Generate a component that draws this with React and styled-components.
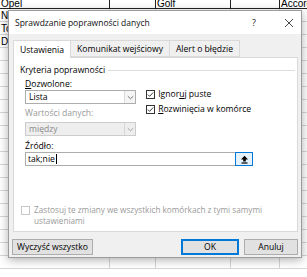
import styled, { createGlobalStyle } from "styled-components";

const GlobalStyle = createGlobalStyle`
  html, body {
    margin: 0;
    padding: 0;
    background: #fff;
  }
  * {
    box-sizing: border-box;
  }
`;

const Screen = styled.div`
  position: relative;
  width: 307px;
  height: 277px;
  overflow: hidden;
  background: #fff;
`;

const Sheet = styled.div`
  display: grid;
  grid-template-columns: 110px 46px 75px 49px 1fr;
  grid-template-rows: 9px;
  grid-auto-rows: 13px;
  font-family: "Liberation Sans", Arial, sans-serif;
  font-size: 10px;
  color: #000;
`;

const Cell = styled.div`
  display: flex;
  align-items: flex-end;
  padding-left: 1px;
  line-height: ${({ $head }) => ($head ? "8px" : "11px")};
  overflow: ${({ $head }) => ($head ? "visible" : "hidden")};
  white-space: nowrap;
  border-right: 1px solid ${({ $head }) => ($head ? "#222" : "#d6d6d6")};
  border-bottom: 1px solid ${({ $head }) => ($head ? "#222" : "#d6d6d6")};
`;

const Dialog = styled.div`
  position: absolute;
  left: 8px;
  top: 10px;
  width: 294px;
  height: 248px;
  border: 1px solid #9c9c9c;
  box-shadow: 0 2px 9px rgba(0, 0, 0, 0.32);
  background: #f0f0f0;
  display: flex;
  flex-direction: column;
  font-family: "Open Sans", "Noto Sans", sans-serif;
  font-size: 8.6px;
  color: #000;
`;

const TitleBar = styled.div`
  height: 23px;
  background: #fff;
  display: flex;
  align-items: center;
  padding-left: 6px;
`;

const Title = styled.div`
  flex: 1;
  font-size: 8.5px;
  color: #111;
`;

const TitleButton = styled.div`
  width: 24px;
  height: 100%;
  display: flex;
  align-items: center;
  justify-content: center;
  font-size: 9px;
  color: #222;
  margin-right: ${({ $gap }) => $gap || "0"};
`;

const Body = styled.div`
  flex: 1;
  display: flex;
  flex-direction: column;
  padding: 6px 3px 0 3px;
`;

const Tabs = styled.div`
  display: flex;
  height: 17px;
  margin-left: 1px;
`;

const Tab = styled.div`
  display: flex;
  align-items: center;
  padding: 0 6px;
  border: 1px solid #d9d9d9;
  border-left-width: ${({ $first }) => ($first ? "1px" : "0")};
  border-bottom: ${({ $active }) => ($active ? "none" : "1px solid #d9d9d9")};
  background: ${({ $active }) => ($active ? "#fff" : "#f0f0f0")};
  position: relative;
  z-index: 1;
  margin-bottom: ${({ $active }) => ($active ? "-1px" : "0")};
  height: ${({ $active }) => ($active ? "18px" : "17px")};
`;

const Panel = styled.div`
  height: 175px;
  margin-left: 1px;
  border: 1px solid #d9d9d9;
  background: #fff;
  display: flex;
  flex-direction: column;
  padding: 6px 2px 0 6px;
`;

const GroupHeader = styled.div`
  display: flex;
  align-items: center;
  height: 12px;
  gap: 3px;
  &::after {
    content: "";
    flex: 1;
    border-top: 1px solid #dcdcdc;
  }
`;

const Fields = styled.div`
  display: flex;
  gap: 10px;
  padding-left: 5px;
`;

const Column = styled.div`
  display: flex;
  flex-direction: column;
  width: ${({ $width }) => $width};
`;

const Label = styled.div`
  height: 12px;
  line-height: 12px;
  margin-top: ${({ $top }) => $top || "0"};
  color: ${({ $disabled }) => ($disabled ? "#9a9a9a" : "#000")};
  u {
    text-decoration-thickness: 1px;
    text-underline-offset: 1px;
  }
`;

const Combo = styled.div`
  height: 14px;
  display: flex;
  border: 1px solid ${({ $disabled }) => ($disabled ? "#cccccc" : "#adadad")};
  background: ${({ $disabled }) => ($disabled ? "#eeeeee" : "#fff")};
  color: ${({ $disabled }) => ($disabled ? "#8a8a8a" : "#000")};
  margin-top: ${({ $top }) => $top || "0"};
`;

const ComboText = styled.div`
  flex: 1;
  padding-left: 3px;
  line-height: 12px;
`;

const ComboArrow = styled.div`
  width: 11px;
  display: flex;
  align-items: center;
  justify-content: center;
  border-left: 1px solid ${({ $disabled }) => ($disabled ? "#d6d6d6" : "#dadada")};
  background: ${({ $disabled }) => ($disabled ? "#eeeeee" : "#f5f5f5")};
`;

const CheckRow = styled.div`
  display: flex;
  align-items: center;
  gap: 3px;
  height: 14px;
  margin-top: ${({ $top }) => $top || "0"};
  color: ${({ $disabled }) => ($disabled ? "#9a9a9a" : "#000")};
  u {
    text-decoration-thickness: 1px;
    text-underline-offset: 1px;
  }
`;

const Box = styled.div`
  width: 9px;
  height: 9px;
  flex: none;
  margin-top: ${({ $top }) => $top || "0"};
  border: 1px solid ${({ $disabled }) => ($disabled ? "#c8c8c8" : "#333")};
  background: #fff;
  display: flex;
  align-items: center;
  justify-content: center;
`;

const SourceBlock = styled.div`
  display: flex;
  flex-direction: column;
  padding-left: 5px;
  width: 233px;
`;

const Input = styled.div`
  height: 14px;
  display: flex;
  border: 1px solid #adadad;
  background: #fff;
`;

const InputText = styled.div`
  flex: 1;
  padding-left: 2px;
  line-height: 12px;
  display: flex;
  align-items: center;
  &::after {
    content: "";
    width: 1px;
    height: 10px;
    margin-left: 1px;
    background: #000;
  }
`;

const PickButton = styled.div`
  width: 18px;
  margin: -1px -1px -1px 0;
  border: 1px solid #0078d7;
  background: #e5f1fb;
  display: flex;
  align-items: center;
  justify-content: center;
`;

const ApplyRow = styled.div`
  display: flex;
  gap: 4px;
  margin-top: auto;
  margin-bottom: 5px;
  color: #9a9a9a;
  font-size: 8.2px;
  line-height: 10.5px;
  padding-left: 1px;
`;

const ApplyText = styled.div`
  width: 240px;
`;

const Footer = styled.div`
  display: flex;
  align-items: center;
  margin-top: 7px;
  gap: 5px;
`;

const Button = styled.div`
  height: 16px;
  width: ${({ $width }) => $width};
  display: flex;
  align-items: center;
  justify-content: center;
  background: #e1e1e1;
  border: ${({ $primary }) => ($primary ? "2px solid #0078d7" : "1px solid #adadad")};
  margin-left: ${({ $push }) => ($push ? "auto" : "0")};
`;

const Chevron = ({ color = "#666" }) => (
  <svg width="7" height="5" viewBox="0 0 7 5">
    <path d="M0.8 1.2 L3.5 3.8 L6.2 1.2" fill="none" stroke={color} strokeWidth="0.9" />
  </svg>
);

const Check = () => (
  <svg width="8" height="7" viewBox="0 0 8 7">
    <path d="M1 3.6 L3 5.6 L7 1.2" fill="none" stroke="#222" strokeWidth="1" />
  </svg>
);

const UpArrow = () => (
  <svg width="9" height="9" viewBox="0 0 9 9">
    <path d="M4.5 0.8 L8 4.4 H5.8 V6.4 H3.2 V4.4 H1 Z" fill="#000" />
    <rect x="1.5" y="7.4" width="6" height="1.2" fill="#000" />
  </svg>
);

const Close = () => (
  <svg width="10" height="10" viewBox="0 0 10 10">
    <path d="M1 1 L9 9 M9 1 L1 9" stroke="#333" strokeWidth="0.9" />
  </svg>
);

const sheetRows = [
  ["Opel", "", "Golf", "", "Accord"],
  ["Nissan", "", "", "", ""],
  ["Toyota", "", "", "", ""],
  ["Dacia", "", "", "", ""],
  ...Array.from({ length: 17 }, () => ["", "", "", "", ""]),
];

export default function App() {
  return (
    <Screen>
      <GlobalStyle />
      <Sheet>
        {sheetRows.map((row, r) =>
          row.map((text, c) => (
            <Cell key={`${r}-${c}`} $head={r === 0}>
              {text}
            </Cell>
          ))
        )}
      </Sheet>

      <Dialog>
        <TitleBar>
          <Title>Sprawdzanie poprawności danych</Title>
          <TitleButton $gap="11px">?</TitleButton>
          <TitleButton>
            <Close />
          </TitleButton>
        </TitleBar>

        <Body>
          <Tabs>
            <Tab $active $first>Ustawienia</Tab>
            <Tab>Komunikat wejściowy</Tab>
            <Tab>Alert o błędzie</Tab>
          </Tabs>

          <Panel>
            <GroupHeader>Kryteria poprawności</GroupHeader>

            <Fields>
              <Column $width="112px">
                <Label $top="2px">
                  <u>D</u>ozwolone:
                </Label>
                <Combo>
                  <ComboText>Lista</ComboText>
                  <ComboArrow>
                    <Chevron />
                  </ComboArrow>
                </Combo>
                <Label $top="3px" $disabled>
                  Wartości danych:
                </Label>
                <Combo $top="3px" $disabled>
                  <ComboText>między</ComboText>
                  <ComboArrow $disabled>
                    <Chevron color="#999" />
                  </ComboArrow>
                </Combo>
              </Column>

              <Column $width="150px">
                <CheckRow $top="11px">
                  <Box>
                    <Check />
                  </Box>
                  <span>
                    Ignor<u>u</u>j puste
                  </span>
                </CheckRow>
                <CheckRow $top="1px">
                  <Box>
                    <Check />
                  </Box>
                  <span>
                    <u>R</u>ozwinięcia w komórce
                  </span>
                </CheckRow>
              </Column>
            </Fields>

            <SourceBlock>
              <Label $top="4px">
                Źródło:
              </Label>
              <Input>
                <InputText>tak;nie</InputText>
                <PickButton>
                  <UpArrow />
                </PickButton>
              </Input>
            </SourceBlock>

            <ApplyRow>
              <Box $disabled $top="1px" />
              <ApplyText>
                Zastosuj te zmiany we wszystkich komórkach z tymi samymi ustawieniami
              </ApplyText>
            </ApplyRow>
          </Panel>

          <Footer>
            <Button $width="81px">Wyczyść wszystko</Button>
            <Button $width="58px" $primary $push>
              OK
            </Button>
            <Button $width="54px">Anuluj</Button>
          </Footer>
        </Body>
      </Dialog>
    </Screen>
  );
}
